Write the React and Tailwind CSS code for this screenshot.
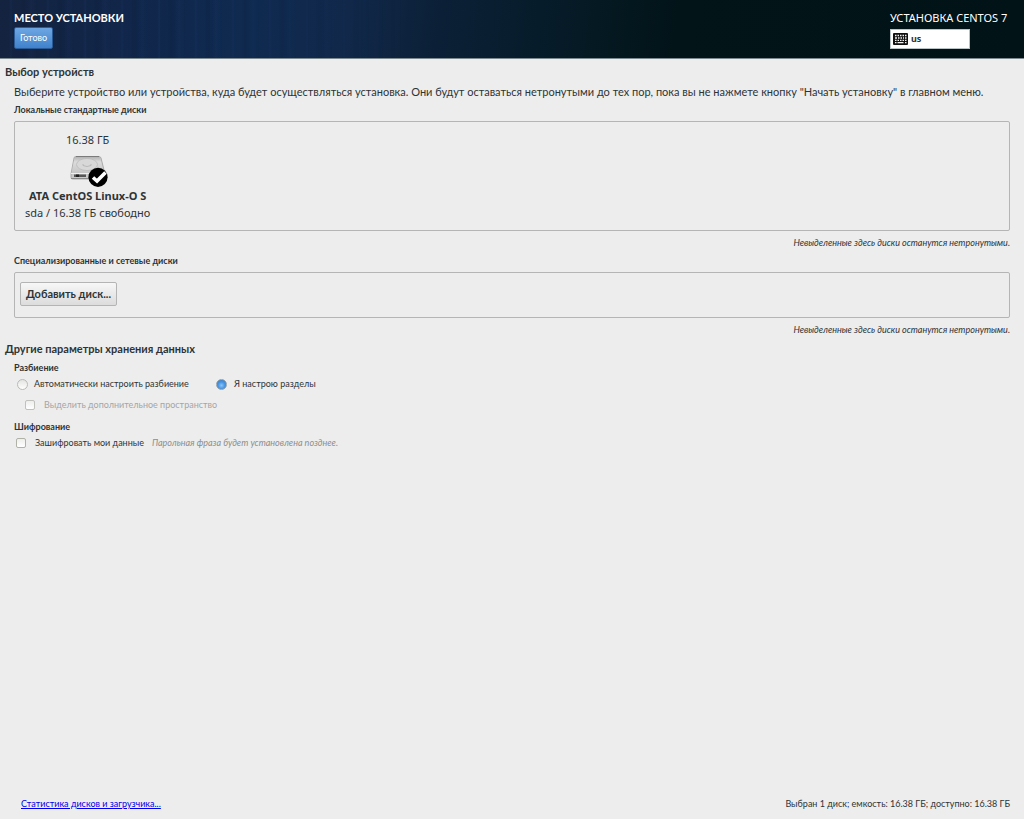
import { useState } from "react";

function DriveIcon() {
  return (
    <svg viewBox="0 0 40 33" className="h-[33px] w-10" aria-hidden="true">
      <defs>
        <linearGradient id="drive-top" x1="0" y1="0" x2="0" y2="1">
          <stop offset="0" stopColor="#b4b4b4" />
          <stop offset="0.3" stopColor="#dcdcdc" />
          <stop offset="1" stopColor="#c4c4c4" />
        </linearGradient>
      </defs>
      <path d="M7.500 2.500H31Q32.500 2.500 33 4L37 20V23.500Q37 25 35.500 25H4.500Q3 25 3 23.500V20L6 4Q6.400 2.500 7.500 2.500Z" fill="#c9c9c9" stroke="#a0a0a0" strokeWidth="0.8" />
      <path d="M8 2.500H31" stroke="#6f6f6f" strokeWidth="0.8" />
      <path d="M7.500 3H30.500Q32 3 32.300 4L36 19.500H3.500L6.500 4Q6.800 3 7.500 3Z" fill="url(#drive-top)" />
      <ellipse cx="19" cy="10.500" rx="10.500" ry="6" fill="#d8d8d8" stroke="#bababa" strokeWidth="0.8" />
      <path d="M15 10v1.500q4 2 8 0V10" fill="none" stroke="#b0b0b0" strokeWidth="0.8" />
      <path d="M3 19.500H36" stroke="#efefef" />
      <rect x="6" y="20.500" width="12" height="2.500" fill="#555" />
      <rect x="8" y="20.500" width="3" height="2.500" fill="#222" />
      <rect x="3" y="24" width="20" height="1" fill="#8a8a8a" />
      <circle cx="30" cy="23.300" r="9.600" fill="#000" />
      <path d="M25 23.500L29 27L37.500 18.500" fill="none" stroke="#fff" strokeWidth="3.600" />
    </svg>
  );
}

function KeyboardIcon() {
  return (
    <svg viewBox="0 0 15 12" className="h-3 w-[15px]" aria-hidden="true">
      <rect width="15" height="12" rx="1" fill="#111" />
      <path
        d="M2 2.500h1.500M4.500 2.500H6M7 2.500h1.500M9.500 2.500H11M12 2.500h1.500M2 5h2M5 5h1.500M7.500 5H9M10 5h1M12 5h1.500M2 7.300h1.500M4.500 7.300H6M7 7.300h1.500M9.500 7.300H11M12 7.300h1.500M2 9.700h1.500M4.500 9.700h6M12 9.700h1.500"
        stroke="#f2f2f2"
        strokeWidth="1.300"
      />
    </svg>
  );
}

const radioClass =
  "size-[11px] shrink-0 appearance-none rounded-full border border-[#b9bcb3] bg-linear-to-b from-[#e4e4e2] to-white checked:border-[#8fa0a8] checked:bg-[radial-gradient(circle_at_50%_60%,#8cc4f8_0%,#4b97e4_45%,#2f74c4_100%)]";
const checkClass =
  "size-[10px] shrink-0 appearance-none rounded-[2px] border border-[#b0b2a8] bg-linear-to-b from-[#eeeeec] to-white checked:bg-[#3f8fe0] disabled:border-[#c0c1bb]";
const subheading = "text-[9px] leading-3 font-bold";
const note = "mt-[6px] text-right text-[9px] leading-3 italic";

export default function App() {
  const [mode, setMode] = useState("manual");
  return (
    <div className="flex min-h-screen flex-col bg-[#ededed] font-['Lato','Noto_Sans',sans-serif] text-[#2e3436]">
      <header className="relative flex h-[59px] shrink-0 justify-between border-b border-[#7c8a90] bg-[linear-gradient(97deg,#14233f_0%,#11264a_12%,#0f2a50_25%,#11284a_34%,#0b2036_43%,#061b27_55%,#021418_66%,#011317_100%)] px-[14px] pt-[10px] text-white">
        <div className="absolute inset-y-0 left-0 w-[40%] bg-[repeating-linear-gradient(90deg,transparent_0px,transparent_9px,#3c6eb012_11px,transparent_13px,transparent_20px,#0000000e_23px,transparent_27px,#3c6eb00c_31px,transparent_37px)] mask-r-from-50% mask-r-to-100%" />
        <div className="relative">
          <h1 className="text-[11px] leading-4 font-bold">МЕСТО УСТАНОВКИ</h1>
          <button type="button" className="mt-px block h-[22px] w-[39px] rounded-[2px] border border-[#2a5b96] bg-linear-to-b from-[#6ea6e2] to-[#3f82cc] text-[9px] leading-3 text-white">
            Готово
          </button>
        </div>
        <div className="relative w-[120px]">
          <p className="font-['Noto_Sans',sans-serif] text-[11px] leading-4 whitespace-nowrap">УСТАНОВКА CENTOS 7</p>
          <button type="button" className="mt-[3px] flex h-5 w-20 items-center gap-[3px] border border-[#b9c3c6] bg-white px-[2px] font-['Noto_Sans',sans-serif] text-[9px] leading-3 font-bold text-[#2e3436]">
            <KeyboardIcon />
            us
          </button>
        </div>
      </header>

      <main className="flex-1 px-[5px] pt-[5px]">
        <section>
          <h2 className="text-[11px] leading-4 font-bold">Выбор устройств</h2>
          <div className="px-[9px]">
            <p className="mt-1 text-[11px] leading-4">
              Выберите устройство или устройства, куда будет осуществляться установка. Они будут оставаться нетронутыми до тех пор, пока вы не нажмете кнопку "Начать установку" в главном меню.
            </p>
            <h3 className={`mt-1 ${subheading}`}>Локальные стандартные диски</h3>
            <div className="mt-[5px] flex h-[110px] rounded-[2px] border border-[#b5b5b5] px-[10px] pt-[9px]">
              <button type="button" aria-pressed="true" className="flex flex-col items-center self-start font-['Noto_Sans',sans-serif] text-[11px] leading-[17px]">
                <span>16.38 ГБ</span>
                <span className="mt-[6px]"><DriveIcon /></span>
                <span className="font-bold">ATA CentOS Linux-O S</span>
                <span>sda / 16.38 ГБ свободно</span>
              </button>
            </div>
            <p className={note}>Невыделенные здесь диски останутся нетронутыми.</p>

            <h3 className={`mt-[6px] ${subheading}`}>Специализированные и сетевые диски</h3>
            <div className="mt-[5px] h-[46px] rounded-[2px] border border-[#b5b5b5] px-[5px] pt-[9px]">
              <button type="button" className="block h-6 rounded-[2px] border border-[#b4b4b4] bg-linear-to-b from-[#f7f7f7] to-[#dcdcdc] px-[5px] text-[11px] leading-4 font-bold">
                Добавить диск...
              </button>
            </div>
            <p className={note}>Невыделенные здесь диски останутся нетронутыми.</p>
          </div>
        </section>

        <section className="mt-[5px]">
          <h2 className="text-[11px] leading-4 font-bold">Другие параметры хранения данных</h2>
          <fieldset className="mt-[5px] px-[9px] text-[9px] leading-3">
            <legend className="font-bold">Разбиение</legend>
            <div className="mt-1 flex pl-[3px]">
              <label className="flex w-[199px] items-center gap-[6px]">
                <input type="radio" name="mode" className={radioClass} checked={mode === "auto"} onChange={() => setMode("auto")} />
                Автоматически настроить разбиение
              </label>
              <label className="flex items-center gap-[7px]">
                <input type="radio" name="mode" className={radioClass} checked={mode === "manual"} onChange={() => setMode("manual")} />
                Я настрою разделы
              </label>
            </div>
            <label className="mt-[9px] flex items-center gap-[9px] pl-[11px] text-[#a5a5a5]">
              <input type="checkbox" className={checkClass} disabled />
              Выделить дополнительное пространство
            </label>
          </fieldset>
          <fieldset className="mt-[10px] px-[9px] text-[9px] leading-3">
            <legend className="font-bold">Шифрование</legend>
            <div className="mt-1 flex items-center gap-2 pl-[2px]">
              <label className="flex items-center gap-[9px]">
                <input type="checkbox" className={checkClass} />
                Зашифровать мои данные
              </label>
              <span className="text-[#8b8e8f] italic">Парольная фраза будет установлена позднее.</span>
            </div>
          </fieldset>
        </section>
      </main>

      <footer className="flex justify-between pr-[14px] pb-[9px] pl-[21px] text-[9px] leading-3">
        <a href="#summary" className="text-[#0000ee] underline">Статистика дисков и загрузчика...</a>
        <p>Выбран 1 диск; емкость: 16.38 ГБ; доступно: 16.38 ГБ</p>
      </footer>
    </div>
  );
}
